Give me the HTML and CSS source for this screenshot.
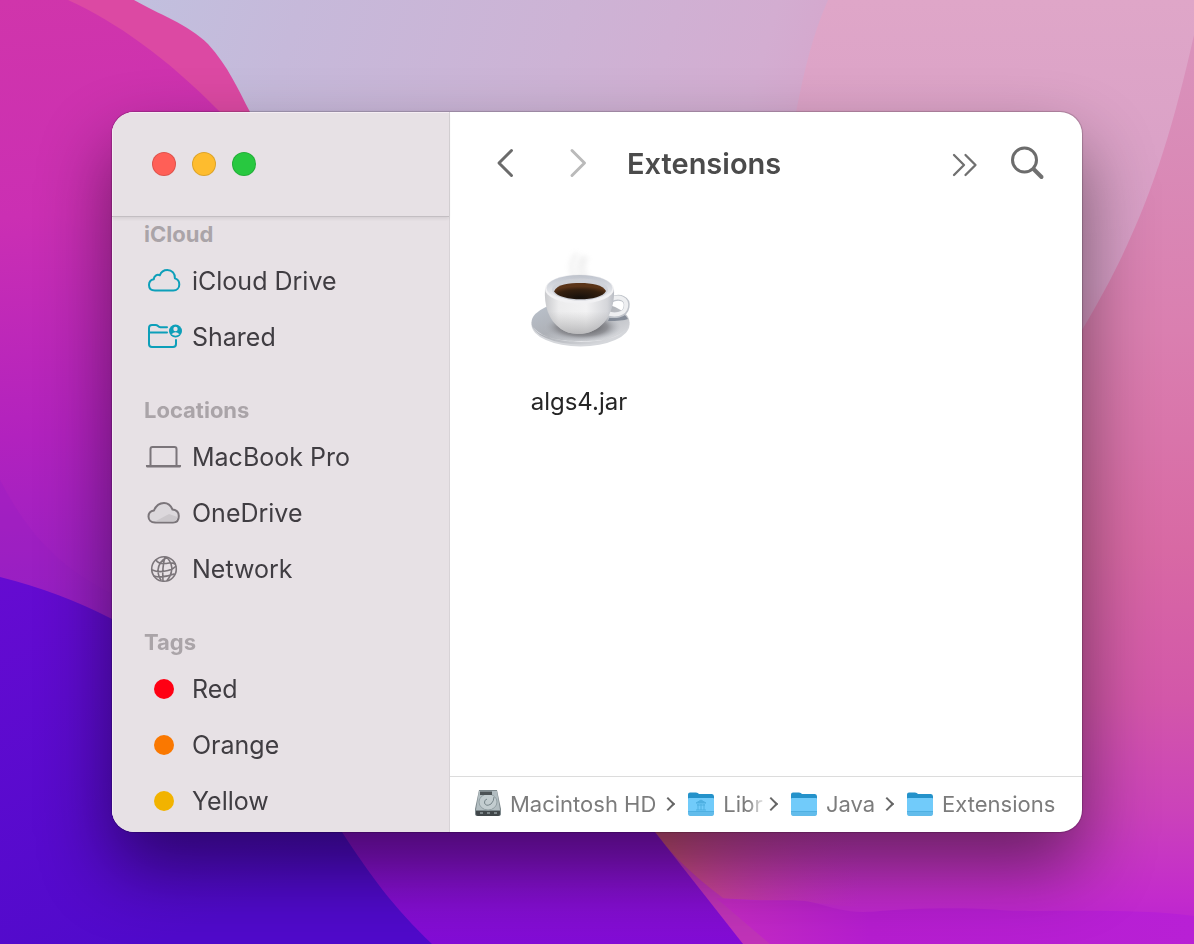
FILE: index.html
```html
<!DOCTYPE html>
<html lang="en">
<head>
<meta charset="utf-8">
<meta name="viewport" content="width=device-width, initial-scale=1">
<title>Extensions</title>
<link rel="stylesheet" href="styles.css">
</head>
<body>
<svg class="wallpaper" viewBox="0 0 1194 944" preserveAspectRatio="none" aria-hidden="true">
  <defs>
    <linearGradient id="sky" x1="120" y1="-60" x2="850" y2="160" gradientUnits="userSpaceOnUse">
      <stop offset="0" stop-color="#c0c1df"/><stop offset=".25" stop-color="#c6b9da"/><stop offset=".6" stop-color="#cdb3d5"/><stop offset=".85" stop-color="#d3add1"/><stop offset="1" stop-color="#d6a3ca"/>
    </linearGradient>
    <linearGradient id="rose" x1="0" y1="0" x2="0" y2="944" gradientUnits="userSpaceOnUse">
      <stop offset="0" stop-color="#dfa6c8"/><stop offset=".3" stop-color="#d79ec6"/><stop offset=".5" stop-color="#d67bb0"/><stop offset=".7" stop-color="#d55fab"/><stop offset=".86" stop-color="#cb42ba"/><stop offset=".95" stop-color="#c32bcc"/><stop offset="1" stop-color="#b71fd3"/>
    </linearGradient>
    <linearGradient id="edge" x1="0" y1="0" x2="0" y2="944" gradientUnits="userSpaceOnUse">
      <stop offset="0" stop-color="#d995bd"/><stop offset=".35" stop-color="#da7fb0"/><stop offset=".58" stop-color="#d869a4"/><stop offset=".74" stop-color="#d357a9"/><stop offset=".86" stop-color="#cb42ba"/><stop offset=".95" stop-color="#c32bcc"/><stop offset="1" stop-color="#b71fd3"/>
    </linearGradient>
    <linearGradient id="magenta" x1="0" y1="0" x2="40" y2="620" gradientUnits="userSpaceOnUse">
      <stop offset="0" stop-color="#d035ab"/><stop offset=".35" stop-color="#cb2fb3"/><stop offset=".7" stop-color="#b222be"/><stop offset="1" stop-color="#951fc4"/>
    </linearGradient>
    <linearGradient id="indigo" x1="0" y1="577" x2="160" y2="944" gradientUnits="userSpaceOnUse">
      <stop offset="0" stop-color="#650bd1"/><stop offset="1" stop-color="#500acb"/>
    </linearGradient>
    <linearGradient id="violet" x1="0" y1="780" x2="0" y2="944" gradientUnits="userSpaceOnUse">
      <stop offset="0" stop-color="#8b14c8"/><stop offset="1" stop-color="#830cd6"/>
    </linearGradient>
    <linearGradient id="ember" x1="670" y1="860" x2="860" y2="860" gradientUnits="userSpaceOnUse">
      <stop offset="0" stop-color="#cf4f82"/><stop offset="1" stop-color="#c93bb4" stop-opacity="0"/>
    </linearGradient>
    <linearGradient id="wave" x1="730" y1="0" x2="1194" y2="0" gradientUnits="userSpaceOnUse">
      <stop offset="0" stop-color="#c42ac4"/><stop offset=".3" stop-color="#b61dd0"/><stop offset="1" stop-color="#b820d5"/>
    </linearGradient>
  </defs>
  <rect width="1194" height="944" fill="url(#sky)"/>
  <path d="M828 0C812 36 804 72 796 112V944H1194V0Z" fill="url(#rose)"/>
  <path d="M1194 35C1168 150 1142 230 1082 330V944H1194Z" fill="url(#edge)"/>
  <path d="M500 944V820H1082V944Z" fill="url(#rose)"/>
  <path d="M640 800H900V911L815 903L716 898C690 880 670 855 650 832Z" fill="url(#ember)"/>
  <path d="M655 832L743 944H790C740 910 690 880 655 832Z" fill="#c133b9"/>
  <path d="M716 898C750 904 792 897 815 903S850 914 880 911S970 907 1000 910S1130 907 1194 916V944H770Z" fill="url(#wave)"/>
  <path d="M0 0H134C158 14 188 24 208 44C228 66 238 89 250 112L360 300V700H0Z" fill="#dc49a3"/>
  <path d="M0 0H68C116 22 166 57 220 112L330 270V700H0Z" fill="url(#magenta)"/>
  <path d="M0 480C26 530 56 566 112 594V640H0Z" fill="#931dc3" opacity=".25"/>
  <path d="M300 760H610L655 832L743 944H300Z" fill="url(#violet)"/>
  <path d="M0 577Q60 592 112 619L320 780L342 832C370 875 394 908 432 944H0Z" fill="url(#indigo)"/>
</svg>

<main class="window">
  <aside class="sidebar">
    <div class="titlebar">
      <button class="light close" type="button" aria-label="Close"></button>
      <button class="light minimize" type="button" aria-label="Minimize"></button>
      <button class="light expand" type="button" aria-label="Zoom"></button>
    </div>
    <nav class="places" aria-label="Sidebar">
      <section class="group">
        <h2>iCloud</h2>
        <a href="#drive"><svg class="icon teal" viewBox="0 0 36 28"><path d="M9 23.500C5 23.500 3 21 3 18C3 15 5 12.800 7.800 12.300C7.700 9 11 7 13.800 8.300C15 5.200 18 3 21.300 3C26 3 29.300 6.700 28.900 11.400C31.800 12.300 33.300 14.600 33.300 17.400C33.300 21 30.800 23.500 27.300 23.500Z"/></svg>iCloud Drive</a>
        <a href="#shared"><svg class="icon teal" viewBox="0 0 36 28"><path d="M30 17V21Q30 24 27 24H6Q3 24 3 21V5Q3 2 6 2H9.500Q11 2 12 3T14.500 4.300H21M3 9.500H21"/><circle cx="29.500" cy="8" r="6.500" class="solid"/><circle cx="29.500" cy="6" r="2.200" class="knock"/><path d="M25.500 11.300Q29.500 7.300 33.500 11.300Q29.500 14 25.500 11.300" class="knock"/></svg>Shared</a>
      </section>
      <section class="group">
        <h2>Locations</h2>
        <a href="#macbook"><svg class="icon gray" viewBox="0 0 36 28"><path d="M4.500 23V6Q4.500 4 6.500 4H28.500Q30.500 4 30.500 6V23"/><path class="base" d="M0 22H35Q35.500 24.600 33 24.600H2Q-.500 24.600 0 22Z"/></svg>MacBook Pro</a>
        <a href="#onedrive"><svg class="icon gray" viewBox="0 0 36 28"><path fill="#dcd8dc" d="M9 23.500C5 23.500 2.500 21 2.500 17.500C2.500 14.300 4.700 12 8 11.500C10 6.500 13.500 4 18 4C22.500 4 25 7 26.500 10.500C30.500 11 32.800 13.500 32.800 17C32.800 21 30.500 23.500 27 23.500Z"/><path class="tone" d="M9 22.500L23 15L31.500 18Q30.500 22.500 27 22.500Z"/></svg>OneDrive</a>
        <a href="#network"><svg class="icon gray fine" viewBox="0 0 36 28"><circle cx="18" cy="14" r="12.300"/><path d="M10 5Q13 10 23 8Q27 7.500 29 9M6.300 15Q13 18 22 15.500Q27 14.500 29.600 11.500M8 21Q16 23.500 28 19M21 2.500Q13 6 12 15Q12 21 15 25M19 2Q16 12 17 26M21 2.500Q27 9 25.500 16Q25 21 21 25.500"/></svg>Network</a>
      </section>
      <section class="group">
        <h2>Tags</h2>
        <a href="#red"><span class="tag red"></span>Red</a>
        <a href="#orange"><span class="tag orange"></span>Orange</a>
        <a href="#yellow"><span class="tag yellow"></span>Yellow</a>
      </section>
    </nav>
  </aside>

  <section class="content">
    <header class="toolbar">
      <button class="tool" type="button" aria-label="Back"><svg width="20" height="32" viewBox="0 0 20 32"><path d="M16.500 3.500L4 16L16.500 28.500" stroke="#6b6b6b" stroke-width="3"/></svg></button>
      <button class="tool forward" type="button" aria-label="Forward"><svg width="20" height="32" viewBox="0 0 20 32"><path d="M3 3.500L15.500 16L3 28.500" stroke="#bababa" stroke-width="3"/></svg></button>
      <h1>Extensions</h1>
      <button class="tool more" type="button" aria-label="More"><svg width="28" height="28" viewBox="0 0 28 28"><path d="M3 6L13 16L3 26M14.500 6L24.500 16L14.500 26" stroke="#707070" stroke-width="2.300"/></svg></button>
      <button class="tool" type="button" aria-label="Search"><svg width="36" height="36" viewBox="0 0 36 36"><circle cx="14.500" cy="15" r="12" stroke="#6c6c6c" stroke-width="3"/><path d="M23.500 24L31.500 32" stroke="#707070" stroke-width="4"/></svg></button>
    </header>

    <div class="files">
      <a class="file" href="#algs4">
        <svg class="cup" viewBox="-1 0 128 128" aria-hidden="true">
          <defs>
            <linearGradient id="plate" x1="0" y1="0" x2="1" y2="1"><stop offset="0" stop-color="#bcc4cf"/><stop offset=".45" stop-color="#aeb1b7"/><stop offset="1" stop-color="#e4e5e8"/></linearGradient>
            <radialGradient id="dish"><stop offset="0" stop-color="#4b4c50"/><stop offset=".65" stop-color="#909196"/><stop offset="1" stop-color="#b8bcc3" stop-opacity="0"/></radialGradient>
            <linearGradient id="body" x1="0" y1="0" x2="1" y2="0"><stop offset="0" stop-color="#c9cacd"/><stop offset=".2" stop-color="#ececed"/><stop offset=".6" stop-color="#f2f2f3"/><stop offset=".9" stop-color="#d5d6da"/><stop offset="1" stop-color="#b9bcc3"/></linearGradient>
            <linearGradient id="under" x1="0" y1="0" x2="0" y2="1"><stop offset=".5" stop-color="#999" stop-opacity="0"/><stop offset="1" stop-color="#8d8d90" stop-opacity=".55"/></linearGradient>
            <linearGradient id="lip" x1="0" y1="0" x2="0" y2="1"><stop offset="0" stop-color="#bfc4ce"/><stop offset="1" stop-color="#f5f5f6"/></linearGradient>
            <radialGradient id="coffee" cx=".5" cy=".9" r=".7"><stop offset="0" stop-color="#16100b"/><stop offset=".7" stop-color="#35200f"/><stop offset="1" stop-color="#5b3519"/></radialGradient>
            <filter id="haze" x="-1" y="-.2" width="3" height="1.400"><feGaussianBlur stdDeviation="2.500"/></filter>
          </defs>
          <ellipse cx="64.500" cy="88.500" rx="49" ry="22" fill="#d5d7db"/>
          <ellipse cx="64.500" cy="86.500" rx="49" ry="22" fill="url(#plate)"/>
          <path d="M17 91C27 110 102 112 112 90C105 104 82 105 65 105S28 104 17 91Z" fill="#eceef0" opacity=".75"/>
          <ellipse cx="66" cy="91" rx="39" ry="14" fill="url(#dish)"/>
          <path d="M96 76Q108 75 112 83Q106 85 92 85Z" fill="#6f7887" opacity=".75"/>
          <path d="M94 64C104 59 112 63 110.500 71C109 80 98 80 91 78" fill="none" stroke="#bfc3ca" stroke-width="6"/>
          <path d="M94 63.500C104 59 111.500 63 110 71C108.500 79 98 79.500 91 77" fill="none" stroke="#eeeff1" stroke-width="4"/>
          <path d="M29 53C28 69 32 84 45 93Q55 100 71 97C90 92 99 74 98 53Z" fill="url(#body)"/>
          <path d="M29 53C28 69 32 84 45 93Q55 100 71 97C90 92 99 74 98 53Z" fill="url(#under)"/>
          <ellipse cx="63.500" cy="53" rx="34.500" ry="14.500" fill="#f1f1f3"/>
          <ellipse cx="63.500" cy="52" rx="33" ry="13" fill="url(#lip)"/>
          <ellipse cx="64" cy="53.500" rx="28" ry="11" fill="#cfd2d9"/>
          <path d="M38 55.500C41 48 53 47 64.500 47S87 49 90 55C85 66 45 66 38 55.500Z" fill="url(#coffee)"/>
          <path d="M60 45Q50 30 61 17M66 43Q58 30 68 20M71 42Q64 30 71 21" fill="none" stroke="#bbb" stroke-width="4" opacity=".2" filter="url(#haze)"/>
        </svg>
        <span>algs4.jar</span>
      </a>
    </div>

    <nav aria-label="Path">
      <ol class="path">
        <li><svg class="crumb-icon" viewBox="0 0 28 28"><path d="M5 0H23L27 19V24Q27 26 24 26H4Q1 26 1 24V19Z" fill="#7e898d"/><path d="M5 1H23L26 20H2Z" fill="#b2bdc1"/><ellipse cx="14" cy="12" rx="9" ry="8" fill="#c3cdd0" stroke="#93a0a4"/><path d="M6 1.500H18V5H6Z" fill="#4c5356"/><path d="M13 9Q10 10 10.500 13Q12 17 17 14Q20 11 20 7" fill="none" stroke="#77858a"/><path d="M2 21H26V24Q26 26 24 26H4Q2 26 2 24Z" fill="#41474a"/><path d="M6 23H9M13 23H16M20 23H23" stroke="#7d8689" stroke-width="2"/></svg><a href="#hd">Macintosh HD</a></li>
        <li><svg class="crumb-icon" viewBox="0 0 28 28"><use href="#folder"/><path d="M9 13L14 10L19 13ZM10 15H18M11 14V20M14 14V20M17 14V20M9 20H19" fill="#4fb0e2" stroke="#4fb0e2"/></svg><a class="faded" href="#library" title="Library">Libr</a></li>
        <li><svg class="crumb-icon" viewBox="0 0 28 28"><use href="#folder"/></svg><a href="#java">Java</a></li>
        <li><svg class="crumb-icon" viewBox="0 0 28 28"><g id="folder"><path d="M1 4.500Q1 2.500 3 2.500H9Q11 2.500 12 4H25Q27 4 27 6.500V12H1Z" fill="#2492ca"/><path d="M1 9Q1 8 2 8H26Q27 8 27 9V23Q27 25 25 25H3Q1 25 1 23Z" fill="#71cbfa"/><path d="M1 21.500H27V23Q27 26 25 26H3Q1 26 1 23Z" fill="#62bceb"/><path d="M1 21.500H27" stroke="#4fb0e2"/></g></svg><a href="#extensions" aria-current="page">Extensions</a></li>
      </ol>
    </nav>
  </section>
</main>
</body>
</html>
```
FILE: styles.css
```css
* { box-sizing: border-box; }

body {
  margin: 0;
  min-height: 100vh;
  padding: 112px;
  display: flex;
  font-family: Inter, "Liberation Sans", sans-serif;
  color: #403d42;
}

.wallpaper {
  position: fixed;
  inset: 0;
  width: 100%;
  height: 100%;
  z-index: -1;
}

.window {
  flex: 1;
  min-width: 0;
  display: grid;
  grid-template-columns: 338px minmax(0, 1fr);
  background: #fff;
  border-radius: 22px;
  overflow: hidden;
  box-shadow: 0 0 1px 1px rgba(0, 0, 0, .2), 0 36px 72px rgba(0, 0, 0, .48);
}

.sidebar {
  background: #e7e1e5;
  border-right: 1px solid #d8d3d7;
  box-shadow: inset 1px 1px 0 #f5edf3;
}

.titlebar {
  height: 105px;
  padding-left: 40px;
  display: flex;
  align-items: center;
  gap: 16px;
  border-bottom: 1px solid #c3bec2;
  box-shadow: 0 2px 3px rgba(0, 0, 0, .07);
}

button {
  border: 0;
  padding: 0;
  background: none;
  font: inherit;
}

.light {
  width: 24px;
  height: 24px;
  border-radius: 50%;
  border: 1px solid rgba(0, 0, 0, .13);
}
.close { background: #ff5f57; }
.minimize { background: #febc2e; }
.expand { background: #28c840; }

.group + .group { margin-top: 28px; }

.group h2 {
  margin: 0;
  padding: 0 0 2px 32px;
  font-size: 22px;
  line-height: 34px;
  font-weight: 700;
  color: #aaa4a8;
}

.group a {
  display: flex;
  align-items: center;
  height: 56px;
  padding-left: 34px;
  font-size: 25px;
  color: inherit;
  text-decoration: none;
}

.icon {
  width: 36px;
  height: 28px;
  margin-right: 10px;
  fill: none;
  stroke-width: 2;
  stroke-linecap: round;
  stroke-linejoin: round;
  overflow: visible;
}
.teal { stroke: #0d9fb9; }
.gray { stroke: #7b757a; }
.fine { stroke-width: 1.6; }
.solid { fill: #0d9fb9; stroke: none; }
.knock { fill: #e7e1e5; stroke: none; }
.base { fill: #7b757a; stroke: none; }
.tone { fill: #cbc7cb; stroke: none; }

.tag {
  width: 20px;
  height: 20px;
  margin: 0 18px 0 8px;
  border-radius: 50%;
}
.red { background: #ff0013; }
.orange { background: #fa7800; }
.yellow { background: #f2b300; }

.content {
  display: flex;
  flex-direction: column;
}

.toolbar {
  height: 104px;
  padding: 0 36px 2px 45px;
  display: flex;
  align-items: center;
}

.toolbar h1 {
  margin: 0 auto 0 38px;
  font-size: 29px;
  font-weight: 600;
  color: #4b4b4b;
}

.tool { display: flex; }
.tool svg {
  fill: none;
  stroke-linecap: round;
  stroke-linejoin: round;
}
.forward { margin-left: 54px; }
.more { margin-right: 31px; }

.files {
  flex: 1;
  padding: 20px 48px;
}

.file {
  display: inline-flex;
  flex-direction: column;
  align-items: center;
  gap: 22px;
  width: 162px;
  color: #262626;
  font-size: 24px;
  line-height: 32px;
  text-decoration: none;
}

.cup {
  width: 128px;
  height: 128px;
}

.path {
  list-style: none;
  margin: 0;
  height: 56px;
  padding: 0 0 2px 24px;
  display: flex;
  align-items: center;
  border-top: 1px solid #dcdcdc;
  font-size: 22px;
  line-height: 32px;
  white-space: nowrap;
}

.path li {
  display: flex;
  align-items: center;
}
.path a {
  color: #7c7c7c;
  text-decoration: none;
}
.path li:not(:last-child)::after {
  content: "";
  width: 8px;
  height: 8px;
  margin: 0 14px 0 7px;
  border: solid #666;
  border-width: 2px 2px 0 0;
  transform: rotate(45deg);
}

.path .faded {
  margin-right: -4px;
  mask-image: linear-gradient(to right, #000 60%, rgba(0, 0, 0, .2));
}

.crumb-icon {
  width: 28px;
  height: 28px;
  margin-right: 8px;
  flex: none;
}
```
